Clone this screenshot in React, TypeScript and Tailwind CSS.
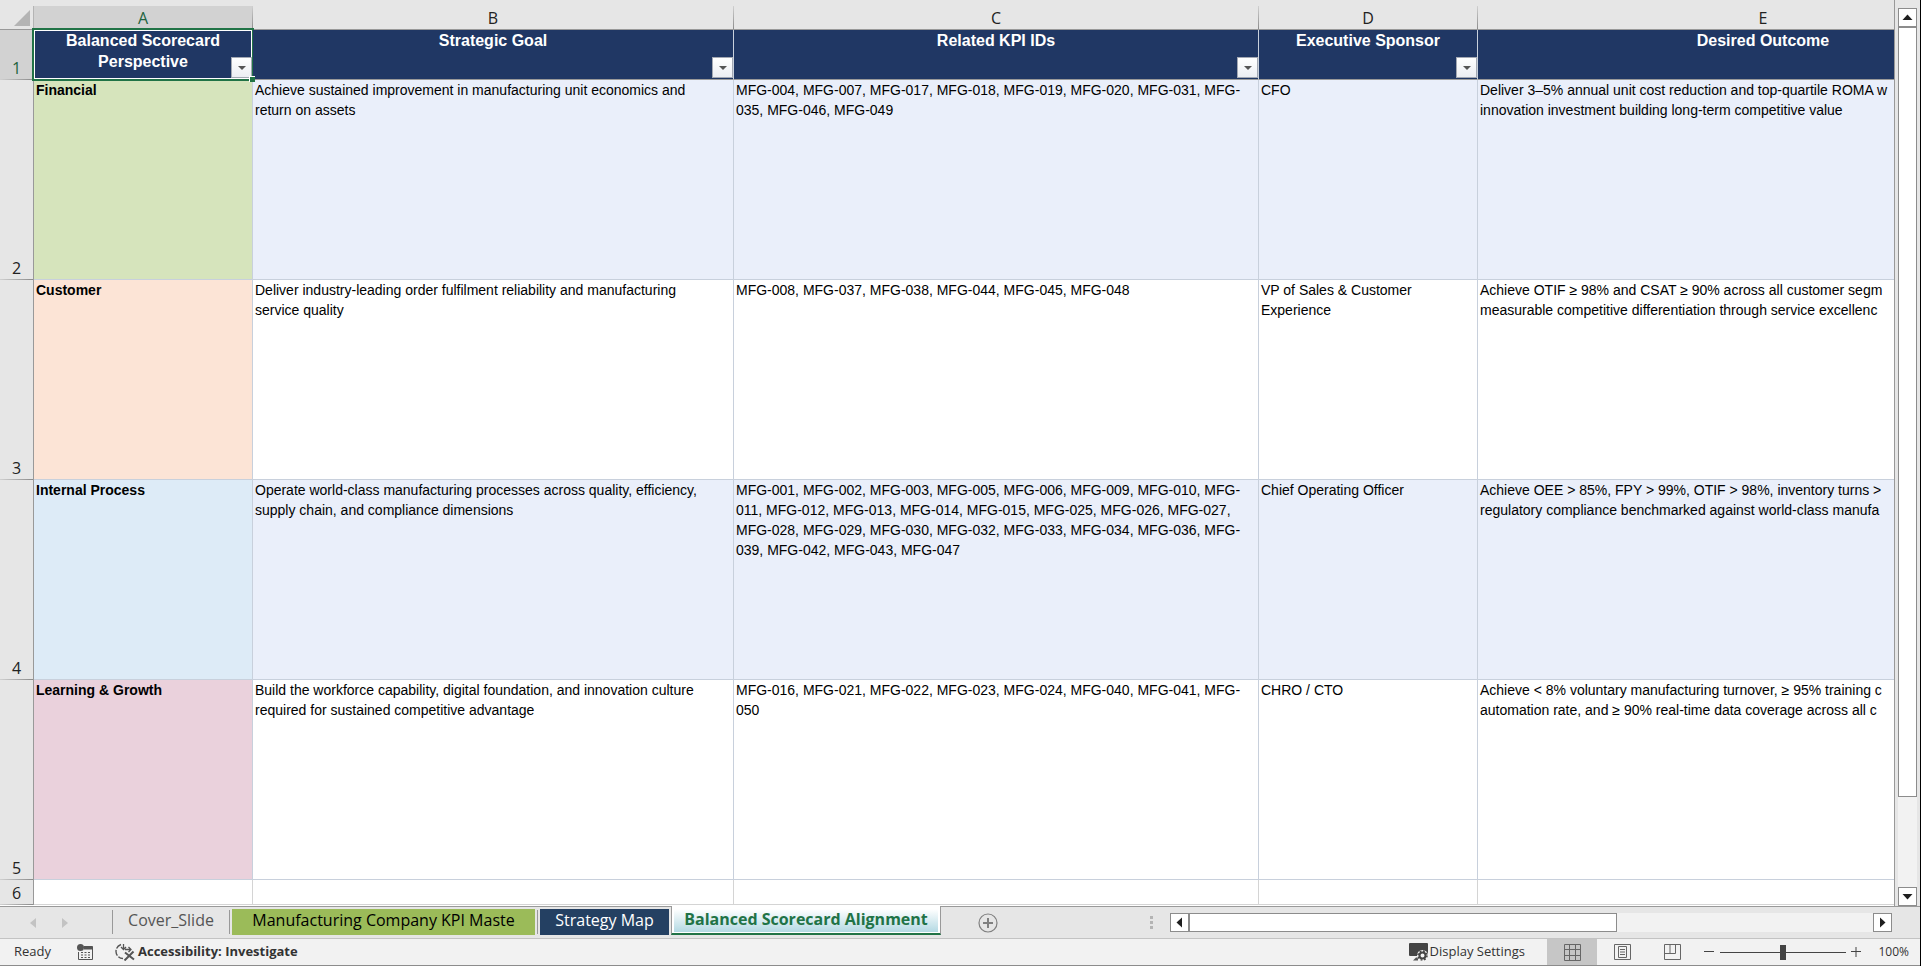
import React, { useState } from 'react';

interface SheetRow {
  perspective: string;
  fill: string;
  goal: string[];
  kpis: string[];
  sponsor: string[];
  outcome: string[];
}

interface HeaderCell {
  letter: string;
  lines: string[];
  width: number;
  filter: boolean;
}

const COLUMNS: HeaderCell[] = [
  { letter: 'A', lines: ['Balanced Scorecard', 'Perspective'], width: 219, filter: true },
  { letter: 'B', lines: ['Strategic Goal'], width: 481, filter: true },
  { letter: 'C', lines: ['Related KPI IDs'], width: 525, filter: true },
  { letter: 'D', lines: ['Executive Sponsor'], width: 219, filter: true },
  { letter: 'E', lines: ['Desired Outcome'], width: 571, filter: false },
];

const ROWS: SheetRow[] = [
  {
    perspective: 'Financial',
    fill: 'bg-[#d6e4bc]',
    goal: ['Achieve sustained improvement in manufacturing unit economics and', 'return on assets'],
    kpis: ['MFG-004, MFG-007, MFG-017, MFG-018, MFG-019, MFG-020, MFG-031, MFG-', '035, MFG-046, MFG-049'],
    sponsor: ['CFO'],
    outcome: ['Deliver 3–5% annual unit cost reduction and top-quartile ROMA w', 'innovation investment building long-term competitive value'],
  },
  {
    perspective: 'Customer',
    fill: 'bg-[#fce4d6]',
    goal: ['Deliver industry-leading order fulfilment reliability and manufacturing', 'service quality'],
    kpis: ['MFG-008, MFG-037, MFG-038, MFG-044, MFG-045, MFG-048'],
    sponsor: ['VP of Sales & Customer', 'Experience'],
    outcome: ['Achieve OTIF ≥ 98% and CSAT ≥ 90% across all customer segm', 'measurable competitive differentiation through service excellenc'],
  },
  {
    perspective: 'Internal Process',
    fill: 'bg-[#ddebf7]',
    goal: ['Operate world-class manufacturing processes across quality, efficiency,', 'supply chain, and compliance dimensions'],
    kpis: [
      'MFG-001, MFG-002, MFG-003, MFG-005, MFG-006, MFG-009, MFG-010, MFG-',
      '011, MFG-012, MFG-013, MFG-014, MFG-015, MFG-025, MFG-026, MFG-027,',
      'MFG-028, MFG-029, MFG-030, MFG-032, MFG-033, MFG-034, MFG-036, MFG-',
      '039, MFG-042, MFG-043, MFG-047',
    ],
    sponsor: ['Chief Operating Officer'],
    outcome: ['Achieve OEE > 85%, FPY > 99%, OTIF > 98%, inventory turns >', 'regulatory compliance benchmarked against world-class manufa'],
  },
  {
    perspective: 'Learning & Growth',
    fill: 'bg-[#ead1dc]',
    goal: ['Build the workforce capability, digital foundation, and innovation culture', 'required for sustained competitive advantage'],
    kpis: ['MFG-016, MFG-021, MFG-022, MFG-023, MFG-024, MFG-040, MFG-041, MFG-', '050'],
    sponsor: ['CHRO / CTO'],
    outcome: ['Achieve < 8% voluntary manufacturing turnover, ≥ 95% training c', 'automation rate, and ≥ 90% real-time data coverage across all c'],
  },
];

const Lines: React.FC<{ lines: string[] }> = ({ lines }) => (
  <>
    {lines.map(line => (
      <div key={line} className="whitespace-nowrap">{line}</div>
    ))}
  </>
);

const RowNumber: React.FC<{ n: number; selected?: boolean }> = ({ n, selected }) => (
  <th
    scope="row"
    className={`border-r border-[#999999] p-0 align-bottom font-['Open_Sans',sans-serif] text-base leading-5 font-normal ${selected ? 'bg-[#d2d2d2] text-[#1e6440]' : 'bg-[#e6e6e6] text-[#222222]'}`}
  >
    <div className="pb-px">{n}</div>
    <div className="h-px bg-linear-to-r from-[#d0d0d0] to-[#8c8c8c]"></div>
  </th>
);

const ScrollArrow: React.FC<{ label: string; points: string }> = ({ label, points }) => (
  <button type="button" aria-label={label} className="flex size-[19px] shrink-0 items-center justify-center border border-[#8c8c8c] bg-white">
    <svg width="11" height="11" viewBox="0 0 11 11" fill="#1f1f1f">
      <polygon points={points} />
    </svg>
  </button>
);

const Grid: React.FC = () => {
  const cell = 'overflow-hidden border-r border-b border-[#c8d0dc] px-0.5 py-0 align-top';

  return (
    <div className="min-w-0 flex-1 overflow-hidden border-r border-[#999999] bg-white">
      <table className="w-[2049px] table-fixed border-separate border-spacing-0 font-['Liberation_Sans',Arial,sans-serif] text-sm leading-5 text-black">
        <colgroup>
          <col className="w-[34px]" />
          {COLUMNS.map(col => (
            <col key={col.letter} style={{ width: col.width }} />
          ))}
        </colgroup>
        <thead>
          <tr className="h-[30px]">
            <td className="border-b border-[#999999] bg-[#e6e6e6] p-0 align-bottom">
              <div className="flex h-[23px] items-center justify-end border-r border-[#b4b4b4] pr-[3px]">
                <svg width="16" height="16" viewBox="0 0 16 16" fill="#b4b4b4">
                  <polygon points="16,0 16,16 0,16" />
                </svg>
              </div>
            </td>
            {COLUMNS.map(col => (
              <th key={col.letter} scope="col" className="border-b border-[#999999] bg-[#e6e6e6] p-0 align-bottom font-['Open_Sans',sans-serif] text-base font-normal">
                <div className={`flex h-[23px] items-stretch leading-6 ${col.letter === 'A' ? 'bg-[#d2d2d2] text-[#1e6440]' : 'text-[#222222]'}`}>
                  <span className="flex-1 text-center">{col.letter}</span>
                  <span className="w-px bg-linear-to-b from-[#d0d0d0] to-[#8c8c8c]"></span>
                </div>
              </th>
            ))}
          </tr>
        </thead>
        <tbody>
          <tr className="h-[50px]">
            <RowNumber n={1} selected />
            {COLUMNS.map(col => (
              <th key={col.letter} scope="col" className="relative border-r border-b border-r-[#c8d0dc] border-b-[#999999] bg-[#203764] p-0 align-top text-base leading-[21px] font-bold text-white">
                <Lines lines={col.lines} />
                {col.letter === 'A' && (
                  <>
                    <div className="pointer-events-none absolute -inset-0.5 border-2 border-[#217346]">
                      <div className="size-full border border-white"></div>
                    </div>
                    <div className="absolute -right-[3px] -bottom-[3px] z-10 size-1.5 border-t border-l border-white bg-[#217346]"></div>
                  </>
                )}
                {col.filter && (
                  <button type="button" aria-label={`Filter ${col.lines.join(' ')}`} className="absolute right-0 bottom-px flex size-[21px] items-center justify-center border border-[#a3a8b3] bg-linear-to-b from-white to-[#eceef3]">
                    <svg width="8" height="4" viewBox="0 0 8 4" fill="#555555">
                      <polygon points="0,0 8,0 4,4" />
                    </svg>
                  </button>
                )}
              </th>
            ))}
          </tr>
          {ROWS.map((row, i) => (
            <tr key={row.perspective} className={`h-[200px] ${i % 2 === 0 ? 'bg-[#eaeffa]' : 'bg-white'}`}>
              <RowNumber n={i + 2} />
              <td className={`${cell} ${row.fill} font-bold`}>{row.perspective}</td>
              <td className={cell}><Lines lines={row.goal} /></td>
              <td className={cell}><Lines lines={row.kpis} /></td>
              <td className={cell}><Lines lines={row.sponsor} /></td>
              <td className={cell}><Lines lines={row.outcome} /></td>
            </tr>
          ))}
          <tr className="h-[25px]">
            <RowNumber n={6} />
            {COLUMNS.map(col => (
              <td key={col.letter} className="border-r border-b border-[#d4d4d4] p-0"></td>
            ))}
          </tr>
        </tbody>
      </table>
    </div>
  );
};

const VerticalScroll: React.FC = () => (
  <div className="flex w-[25px] shrink-0 flex-col items-start pt-2 pl-[3px]">
    <ScrollArrow label="Scroll up" points="5.5,2.5 10.5,8 0.5,8" />
    <div className="flex w-[19px] flex-1 flex-col bg-[#f2f2f2]">
      <div className="flex-17 border border-[#8c8c8c] bg-white"></div>
      <div className="flex-2"></div>
    </div>
    <ScrollArrow label="Scroll down" points="0.5,3 10.5,3 5.5,8.5" />
  </div>
);

const TabBar: React.FC = () => {
  const tab = 'mt-0.5 h-[26px] shrink-0 pb-1 text-base leading-5 whitespace-nowrap';
  const divider = 'mt-[3px] h-6 w-px shrink-0 bg-[#999999]';

  return (
    <div className="flex h-8 shrink-0 border-t border-[#999999]">
      <nav aria-label="Sheets" className="flex flex-1 items-start font-['Open_Sans',sans-serif]">
        <div className="flex h-8 w-28 shrink-0 items-center gap-[26px] pl-[30px]">
          <button type="button" aria-label="Previous sheet">
            <svg width="6" height="10" viewBox="0 0 6 10" fill="#c3c3c3"><polygon points="6,0 6,10 0,5" /></svg>
          </button>
          <button type="button" aria-label="Next sheet">
            <svg width="6" height="10" viewBox="0 0 6 10" fill="#c3c3c3"><polygon points="0,0 6,5 0,10" /></svg>
          </button>
        </div>
        <div className={divider}></div>
        <button type="button" className={`${tab} w-[116px] text-[#555555]`}>Cover_Slide</button>
        <div className={`${divider} mr-0.5`}></div>
        <button type="button" className={`${tab} w-[303px] bg-[#9bbb59] text-black`}>Manufacturing Company KPI Maste</button>
        <div className={`${divider} mx-0.5`}></div>
        <button type="button" className={`${tab} mr-0.5 w-[129px] bg-[#244062] text-white`}>Strategy Map</button>
        <div className="-mt-px flex h-[29px] w-[270px] shrink-0 border-x border-b-2 border-x-[#999999] border-b-[#217346] bg-white px-0.5 pt-[3px] pb-px">
          <button type="button" aria-current="page" className="w-full bg-linear-to-b from-white to-[#b3d9e3] pb-1 text-base leading-5 font-bold whitespace-nowrap text-[#217346]">Balanced Scorecard Alignment</button>
        </div>
        <button type="button" aria-label="New sheet" className="mt-1.5 ml-[37px]">
          <svg width="20" height="20" viewBox="0 0 20 20" fill="none" stroke="#808080">
            <circle cx="10" cy="10" r="9" strokeWidth="1.2" />
            <path d="M10 5v10M5 10h10" strokeWidth="2" />
          </svg>
        </button>
      </nav>
      <div className="flex w-[770px] shrink-0 items-start">
        <div className="mt-[9px] mr-[17px] flex flex-col gap-0.5">
          <span className="size-[3px] bg-[#b4b4b4]"></span>
          <span className="size-[3px] bg-[#b4b4b4]"></span>
          <span className="size-[3px] bg-[#b4b4b4]"></span>
        </div>
        <div className="mt-1.5 mr-7 flex flex-1">
          <ScrollArrow label="Scroll left" points="8,0.5 8,10.5 2.5,5.5" />
          <div className="flex flex-1 bg-[#f2f2f2]">
            <div className="flex-5 border border-[#8c8c8c] bg-white"></div>
            <div className="flex-3"></div>
          </div>
          <ScrollArrow label="Scroll right" points="3,0.5 8.5,5.5 3,10.5" />
        </div>
      </div>
    </div>
  );
};

const StatusBar: React.FC = () => {
  const [zoom, setZoom] = useState(100);

  return (
    <footer className="flex h-7 shrink-0 items-center border-t border-b border-t-[#c3c3c3] border-b-[#8c8c8c] bg-[#f2f2f2] font-['Open_Sans',sans-serif] text-[13px] text-[#333333]">
      <span className="ml-3.5 w-[63px]">Ready</span>
      <button type="button" aria-label="Record macro" className="mr-[22px]">
        <svg width="16" height="16" viewBox="0 0 16 16" fill="none" stroke="#555555">
          <path d="M7 2.5h8.5v13h-14V8" />
          <path d="M7 4h8.5" strokeWidth="3" />
          <path d="M4 8.5h2M7.5 8.5h2M11 8.5h2M4 11h2M7.5 11h2M11 11h2M4 13.5h2M7.5 13.5h2M11 13.5h2" />
          <circle cx="3.5" cy="3.5" r="3.5" fill="#555555" stroke="none" />
        </svg>
      </button>
      <button type="button" className="flex items-center gap-[3px] font-bold">
        <svg width="20" height="18" viewBox="0 0 20 18" fill="none" stroke="#555555">
          <path d="M6 1.5C2 3 1 6 1 8.500C1 12 4 15.500 8 15.500" strokeWidth="1.4" strokeDasharray="6 1.5" />
          <path d="M8.5 1v5M6 4l2.5 2.5L11 4M10 6.500h6M13.500 4l2.500 2.500-2.500 2.500" strokeWidth="1.3" />
          <path d="M10 9.500l9 7M18.500 8.500L9.500 17.500" strokeWidth="2" />
        </svg>
        Accessibility: Investigate
      </button>
      <div className="flex-1"></div>
      <button type="button" className="mr-[22px] flex items-center gap-0.5">
        <svg width="19" height="18" viewBox="0 0 19 18">
          <rect width="19" height="13" rx="1" fill="#444444" />
          <path d="M4 17.5h5v-3H7z" fill="#555555" />
          <circle cx="13.5" cy="12.5" r="5.5" fill="#f2f2f2" />
          <circle cx="13.5" cy="12.5" r="3" fill="none" stroke="#444444" strokeWidth="2" />
          <circle cx="13.5" cy="12.5" r="4.5" fill="none" stroke="#444444" strokeWidth="1.5" strokeDasharray="1.8 1.734" />
        </svg>
        Display Settings
      </button>
      <button type="button" aria-label="Normal view" className="flex h-[26px] w-[50px] items-center justify-center bg-[#c6c6c6]">
        <svg width="17" height="17" viewBox="0 0 17 17" fill="none" stroke="#666666">
          <path d="M.5.5h16v16H.5zM5.5.5v16M11.5.5v16M.5 5.5h16M.5 11.5h16" />
        </svg>
      </button>
      <button type="button" aria-label="Page layout view" className="flex h-[26px] w-[50px] items-center justify-center">
        <svg width="17" height="16" viewBox="0 0 17 16" fill="none" stroke="#666666">
          <path d="M.5.5h16v15H.5zM4.5 2.5h8v11h-8zM6 5.5h5M6 8h5M6 10.5h5" />
        </svg>
      </button>
      <button type="button" aria-label="Page break preview" className="flex h-[26px] w-[50px] items-center justify-center">
        <svg width="17" height="16" viewBox="0 0 17 16" fill="none" stroke="#666666">
          <path d="M.5.5h16v15H.5zM.5 9.5h11v-9M6 .5v9" />
        </svg>
      </button>
      <button type="button" aria-label="Zoom out" className="mr-1.5 ml-[7px]" onClick={() => setZoom(z => Math.max(10, z - 10))}>
        <svg width="10" height="10" viewBox="0 0 10 10" stroke="#444444"><path d="M0 4.5h10" /></svg>
      </button>
      <input
        type="range"
        aria-label="Zoom"
        min={0}
        max={200}
        value={zoom}
        onChange={e => setZoom(Number(e.target.value))}
        className="h-4 w-[126px] appearance-none bg-transparent [&::-webkit-slider-runnable-track]:h-px [&::-webkit-slider-runnable-track]:bg-[#444444] [&::-webkit-slider-thumb]:-mt-[7px] [&::-webkit-slider-thumb]:h-[15px] [&::-webkit-slider-thumb]:w-1.5 [&::-webkit-slider-thumb]:appearance-none [&::-webkit-slider-thumb]:bg-[#444444]"
      />
      <button type="button" aria-label="Zoom in" className="ml-[5px]" onClick={() => setZoom(z => Math.min(200, z + 10))}>
        <svg width="10" height="10" viewBox="0 0 10 10" stroke="#444444"><path d="M0 4.5h10M5 0v10" /></svg>
      </button>
      <span className="mr-[11px] ml-4 w-8 text-right text-xs">{zoom}%</span>
    </footer>
  );
};

export default function App() {
  return (
    <div className="flex h-screen flex-col overflow-hidden border-r border-black bg-[#e6e6e6]">
      <main className="flex min-h-0 flex-1">
        <Grid />
        <VerticalScroll />
      </main>
      <TabBar />
      <StatusBar />
    </div>
  );
}
